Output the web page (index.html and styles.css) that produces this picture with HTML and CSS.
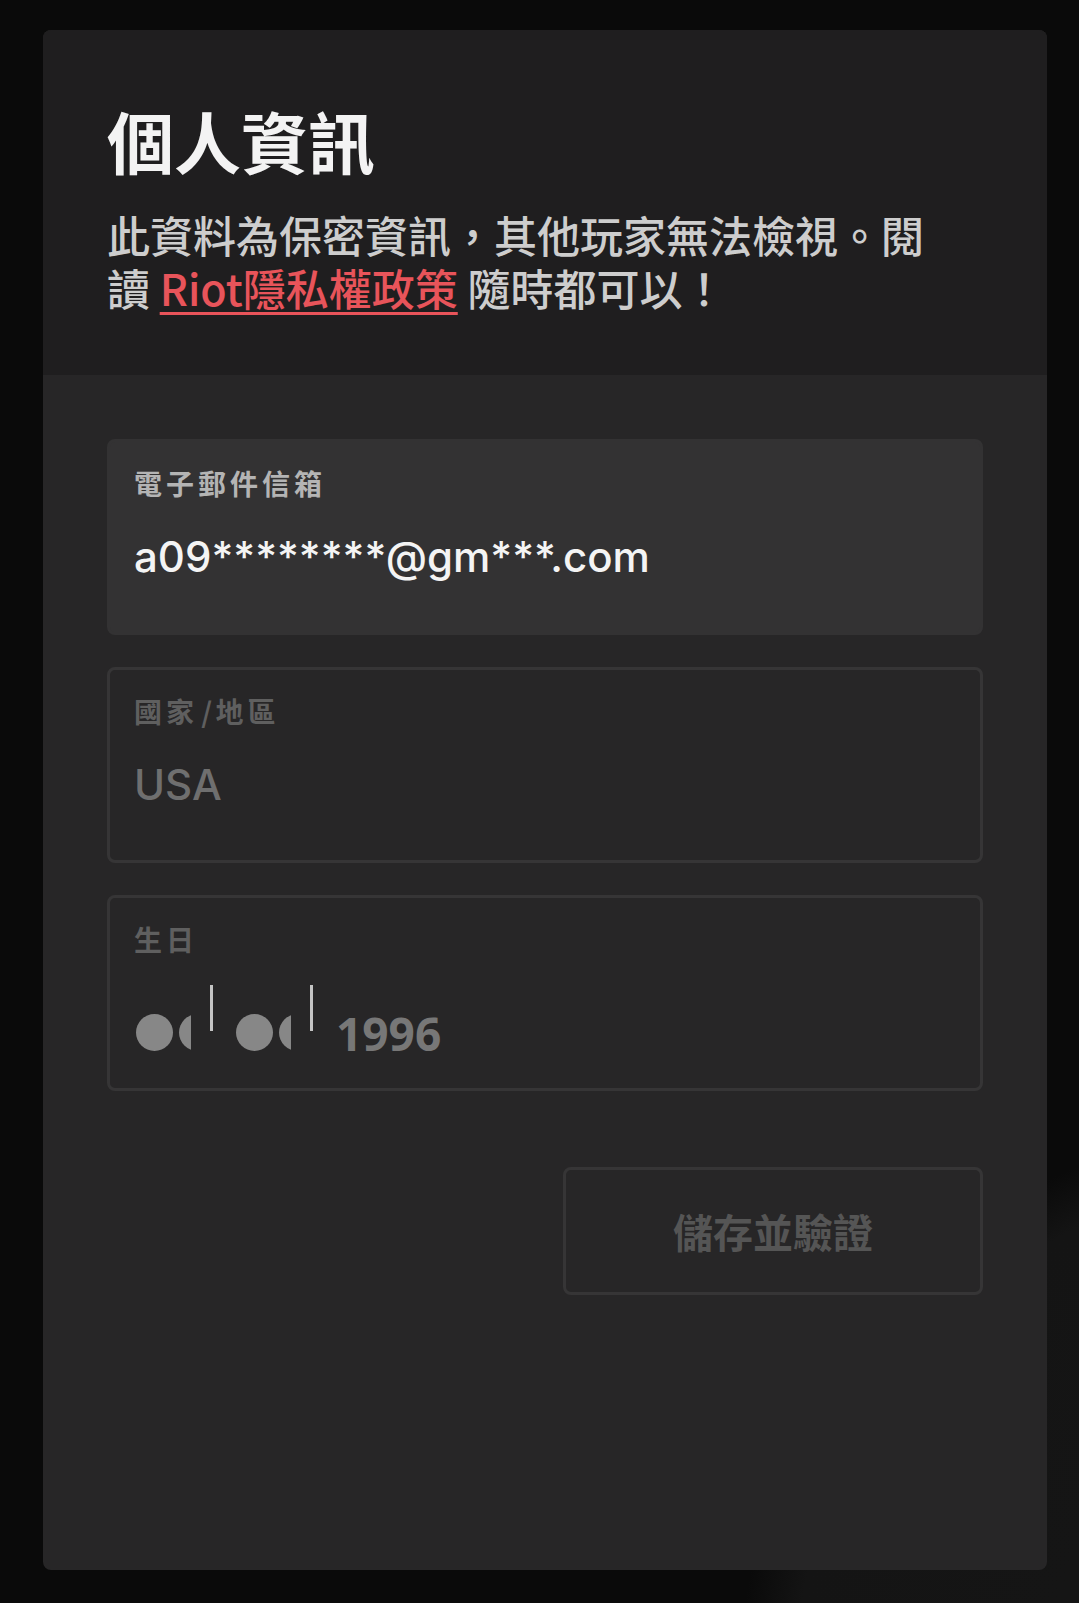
FILE: index.html
```html
<!DOCTYPE html>
<html lang="zh-Hant">
<head>
<meta charset="utf-8">
<title>個人資訊</title>
<link rel="stylesheet" href="styles.css">
</head>
<body>
<main class="card">
  <header class="card-head">
    <h1 class="title">個人資訊</h1>
    <p class="intro">此資料為保密資訊，其他玩家無法檢視。閱讀 <a class="link" href="#">Riot隱私權政策</a> 隨時都可以！</p>
  </header>
  <section class="card-body">
    <div class="field field-filled">
      <div class="field-label">電子郵件信箱</div>
      <div class="field-value">a09********@gm***.com</div>
    </div>
    <div class="field field-disabled">
      <div class="field-label">國家<span class="label-sep"> / </span>地區</div>
      <div class="field-value">USA</div>
    </div>
    <div class="field field-disabled">
      <div class="field-label">生日</div>
      <div class="date-row">
        <span class="dot-mask"><span class="dot"></span><span class="dot"></span></span>
        <span class="date-sep"></span>
        <span class="dot-mask"><span class="dot"></span><span class="dot"></span></span>
        <span class="date-sep"></span>
        <span class="date-year">1996</span>
      </div>
    </div>
    <div class="actions">
      <button class="btn" type="button">儲存並驗證</button>
    </div>
  </section>
</main>
</body>
</html>
```
FILE: styles.css
```css
* { box-sizing: border-box; }

html, body { margin: 0; }

body {
  min-height: 1603px;
  padding: 30px 32px 0 43px;
  background:
    radial-gradient(circle 560px at 1300px 1680px, #161616 0, #141414 90%, #0a0a0a 100%),
    #0a0a0a;
  font-family: "Noto Sans CJK TC", "Noto Sans", sans-serif;
}

.card {
  height: 1540px;
  border-radius: 8px;
  overflow: hidden;
  background: #272627;
  display: flex;
  flex-direction: column;
}

.card-head {
  background: #1f1e1f;
  padding: 70px 64px 61px;
}

.title {
  margin: 0;
  font-size: 67px;
  line-height: 80px;
  font-weight: 700;
  color: #f3f3f3;
}

.intro {
  margin: 28px 0 0;
  max-width: 840px;
  font-size: 43px;
  line-height: 53px;
  font-weight: 500;
  color: #cdcdcd;
}

.link {
  color: #e8545a;
  text-decoration: underline;
  text-decoration-thickness: 3px;
  text-underline-offset: 6px;
}

.card-body {
  padding: 64px 64px 0;
  display: flex;
  flex-direction: column;
  gap: 32px;
}

.field {
  height: 196px;
  border: 3px solid transparent;
  border-radius: 8px;
  padding: 23px 24px 0;
}

.field-label {
  font-size: 28px;
  line-height: 36px;
  font-weight: 700;
  letter-spacing: 4px;
}

.label-sep {
  letter-spacing: 0;
  word-spacing: -3px;
}

.field-value {
  margin-top: 30px;
  font-family: "Inter", "Liberation Sans", sans-serif;
  font-size: 42px;
  line-height: 52px;
  font-weight: 500;
  white-space: nowrap;
}

.field-filled {
  background: #333233;
  border-color: #333233;
}
.field-filled .field-label { color: #b4b4b4; }
.field-filled .field-value { color: #f4f4f4; }

.field-disabled {
  border-color: #363536;
}
.field-disabled .field-label { color: #5f5f5f; }
.field-disabled .field-value { color: #6f6f6f; }

.date-row {
  margin-top: 28px;
  margin-left: 2px;
  height: 66px;
  display: flex;
  align-items: flex-end;
}

.dot-mask {
  flex: none;
  width: 55px;
  height: 37px;
  overflow: hidden;
  display: flex;
  gap: 6px;
}

.dot {
  flex: none;
  width: 37px;
  height: 37px;
  border-radius: 50%;
  background: #878787;
}

.date-sep {
  flex: none;
  align-self: flex-start;
  width: 3px;
  height: 46px;
  margin: 0 23px 0 19px;
  background: #c4c4c4;
}

.date-year {
  font-family: "Open Sans", "Noto Sans", sans-serif;
  font-size: 46px;
  line-height: 46px;
  font-weight: 700;
  color: #777777;
  margin-bottom: -5px;
}

.actions {
  margin-top: 44px;
  display: flex;
  justify-content: flex-end;
}

.btn {
  width: 420px;
  height: 128px;
  border: 3px solid #363536;
  border-radius: 8px;
  background: transparent;
  color: #555555;
  font-family: "Noto Sans CJK TC", "Noto Sans", sans-serif;
  font-size: 40px;
  font-weight: 700;
  padding: 0;
}
```
